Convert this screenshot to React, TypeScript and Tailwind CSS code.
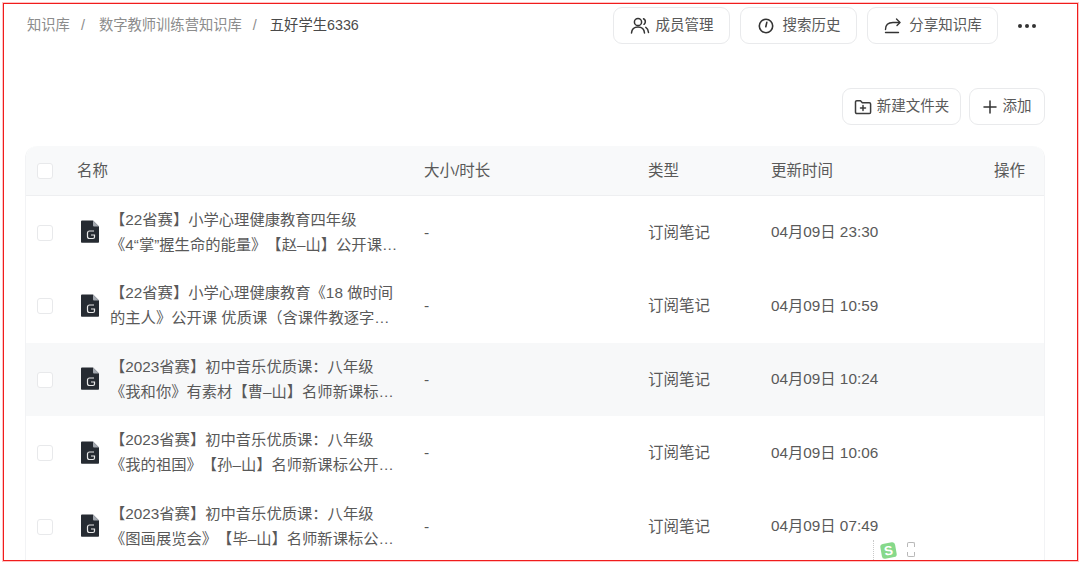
import React from "react";

const rows = [
  ["【22省赛】小学心理健康教育四年级", "《4“掌”握生命的能量》【赵–山】公开课…", "04月09日 23:30", false, 73],
  ["【22省赛】小学心理健康教育《18 做时间", "的主人》公开课 优质课（含课件教逐字…", "04月09日 10:59", false, 74],
  ["【2023省赛】初中音乐优质课：八年级", "《我和你》有素材【曹–山】名师新课标…", "04月09日 10:24", true, 73],
  ["【2023省赛】初中音乐优质课：八年级", "《我的祖国》【孙–山】名师新课标公开…", "04月09日 10:06", false, 74],
  ["【2023省赛】初中音乐优质课：八年级", "《图画展览会》【毕–山】名师新课标公…", "04月09日 07:49", false, 73],
] as const;

function FileIcon() {
  return (
    <svg width="18" height="23" viewBox="0 0 18 23" className="shrink-0">
      <path d="M0 1.500A1 1 0 0 1 1 .5h11L18 6.500V22a.8.8 0 0 1-.8.8H.8A.8.8 0 0 1 0 22Z" fill="#262b32" />
      <path d="M12 .5 18 6.500h-5a1 1 0 0 1-1-1Z" fill="#a4a9b0" />
      <path d="M13 11H8.500a2 2 0 0 0-2 2v3.500a2 2 0 0 0 2 2H12a1.500 1.500 0 0 0 1.500-1.500V15H10" fill="none" stroke="#e8e8e8" strokeWidth="1.200" />
    </svg>
  );
}

function Check() {
  return <div className="w-4 h-4 rounded-[3px] border border-[#e8e9eb] bg-white" />;
}

function TopButton({ icon, label, w }: { icon: React.ReactNode; label: string; w: string }) {
  return (
    <div className={`${w} h-[37px] flex items-center justify-center gap-[6px] rounded-[9px] border border-[#e9eaec] bg-white text-[14.5px] text-[#595959]`}>
      {icon}
      <span>{label}</span>
    </div>
  );
}

export default function App() {
  return (
    <div className="w-[1080px] h-[563px] overflow-hidden bg-white p-[3px] [text-spacing-trim:space-all] font-['Liberation_Sans','Noto_Sans_CJK_SC',sans-serif]">
      <div className="relative h-[558px] w-[1075px] overflow-hidden border border-[#f01c1c] shadow-[0_0_0_1px_#ffc4c4] flex flex-col">
        <div className="flex items-start justify-between pl-[23px] pr-[32px] pt-[3px]">
          <div className="flex items-center h-[37px] text-[14.3px] text-[#8c8c8c]">
            <span>知识库</span>
            <span className="ml-[11px] mr-[14px]">/</span>
            <span>数字教师训练营知识库</span>
            <span className="ml-[11px] mr-[13px]">/</span>
            <span className="text-[#4a4a4a]">五好学生6336</span>
          </div>
          <div className="flex items-center gap-[10px]">
            <TopButton
              w="w-[117px]"
              label="成员管理"
              icon={
                <svg width="20" height="20" viewBox="0 0 20 20" fill="none" stroke="#333" strokeWidth="1.5" strokeLinecap="round">
                  <circle cx="8" cy="6" r="3.600" />
                  <path d="M1.500 17c.3-3.800 3-6 6.500-6s6.200 2.200 6.500 6" />
                  <path d="M13.500 2.800c1.500.7 2 2 1.800 3.300-.1.9-.6 1.700-1.300 2.200M15.800 11.300c1.500.9 2.500 2.800 2.700 5.200" />
                </svg>
              }
            />
            <TopButton
              w="w-[117px]"
              label="搜索历史"
              icon={
                <svg width="18" height="18" viewBox="0 0 18 18" fill="none" stroke="#333" strokeWidth="1.600" strokeLinecap="round" className="mr-[2px]">
                  <circle cx="9" cy="9" r="6.700" />
                  <path d="M9.800 5.400 8.800 9.800" />
                </svg>
              }
            />
            <TopButton
              w="w-[131px]"
              label="分享知识库"
              icon={
                <svg width="20" height="20" viewBox="0 0 20 20" fill="none" stroke="#333" strokeWidth="1.400" strokeLinecap="round" strokeLinejoin="round">
                  <path d="M2.500 16.500h13" />
                  <path d="M2.500 13.500C2.500 9 5.500 6.500 10 6.500h6.500" />
                  <path d="M13.500 3 17 6.500 14 9.500" />
                </svg>
              }
            />
            <div className="w-[37px] flex items-center justify-center gap-[3px]">
              <span className="w-1 h-1 rounded-full bg-[#333]" />
              <span className="w-1 h-1 rounded-full bg-[#333]" />
              <span className="w-1 h-1 rounded-full bg-[#333]" />
            </div>
          </div>
        </div>

        <div className="flex justify-end gap-[8px] pr-[32px] mt-[44px]">
          <div className="w-[119px] h-[37px] flex items-center justify-center gap-[5px] rounded-[9px] border border-[#e9eaec] text-[14.5px] text-[#595959]">
            <svg width="18" height="16" viewBox="0 0 18 16" fill="none" stroke="#3c3c3c" strokeWidth="1.500" strokeLinejoin="round" strokeLinecap="round">
              <path d="M1.500 3a1.300 1.300 0 0 1 1.300-1.300h3.700l1.800 2h7a1.300 1.300 0 0 1 1.300 1.300v8.200a1.300 1.300 0 0 1-1.300 1.300H2.800a1.300 1.300 0 0 1-1.300-1.300Z" />
              <path d="M9 6.600v5M6.500 9.100h5" />
            </svg>
            <span>新建文件夹</span>
          </div>
          <div className="w-[76px] h-[37px] flex items-center justify-center gap-[6px] rounded-[9px] border border-[#e9eaec] text-[14.5px] text-[#595959]">
            <svg width="14" height="14" viewBox="0 0 14 14" stroke="#333" strokeWidth="1.500" strokeLinecap="round">
              <path d="M7 1v12M1 7h12" />
            </svg>
            <span>添加</span>
          </div>
        </div>

        <div className="ml-[21px] mr-[32px] mt-[21px] flex flex-col rounded-t-[12px] border-x border-[#f2f3f5] text-[15.5px] text-[#595959]">
          <div className="h-[50px] grid grid-cols-[51px_347px_224px_123px_1fr_auto] items-center rounded-t-[12px] border-b border-[#eeeff1] bg-[#f8f9fa] pr-[19px]">
            <div className="pl-[11px]"><Check /></div>
            <span>名称</span>
            <span>大小/时长</span>
            <span>类型</span>
            <span>更新时间</span>
            <span>操作</span>
          </div>
          {rows.map(([a, b, t, hi, h], i) => (
            <div
              key={i}
              className={`grid grid-cols-[51px_347px_224px_123px_1fr] items-center ${h === 74 ? "h-[74px]" : "h-[73px]"} ${hi ? "bg-[#f7f8f9]" : "bg-white"}`}
            >
              <div className="pl-[11px]"><Check /></div>
              <div className="flex items-center">
                <div className="w-[33px] pl-[4px] pb-[2px]"><FileIcon /></div>
                <div className="leading-[25px] text-[15.3px] whitespace-nowrap pb-[2px]">
                  <div>{a}</div>
                  <div>{b}</div>
                </div>
              </div>
              <span>-</span>
              <span>订阅笔记</span>
              <span className="whitespace-nowrap text-[15.3px]">{t}</span>
            </div>
          ))}
        </div>

        <div className="absolute left-[869px] top-[536px] flex items-start">
          <span className="h-[20px] border-l border-dotted border-[#c9c9c9]" />
          <div className="ml-[7px] mt-[3px] w-[15px] h-[15px] rotate-[-10deg] rounded-[3px] bg-[#86d98a] flex items-center justify-center text-[13px] leading-none font-bold text-white">S</div>
          <div className="ml-[11px] mt-[2px] flex flex-col gap-[5px]">
            <span className="w-[8px] h-[5px] rounded-t-[2px] border border-b-0 border-[#b8b8b8]" />
            <span className="w-[8px] h-[5px] rounded-b-[2px] border border-t-0 border-[#b8b8b8]" />
          </div>
        </div>
      </div>
    </div>
  );
}
